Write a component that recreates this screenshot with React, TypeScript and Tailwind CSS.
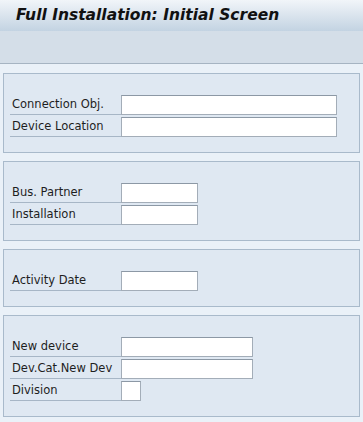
import React from "react";

type Field = { label: string; w: number };

const groups: Field[][] = [
  [
    { label: "Connection Obj.", w: 216 },
    { label: "Device Location", w: 216 },
  ],
  [
    { label: "Bus. Partner", w: 77 },
    { label: "Installation", w: 77 },
  ],
  [{ label: "Activity Date", w: 77 }],
  [
    { label: "New device", w: 132 },
    { label: "Dev.Cat.New Dev", w: 132 },
    { label: "Division", w: 20 },
  ],
];

function Row({ f }: { f: Field }) {
  return (
    <div className="flex h-[22px] items-start">
      <div className="flex h-[20px] w-[111px] items-center border-b border-[#a7b6c6] pl-[2px] pt-[1px] text-[11.5px] text-[#1e1e1e]">
        {f.label}
      </div>
      <div
        className="h-[20px] border border-[#a3adb8] border-t-[#8c98a5] bg-white"
        style={{ width: f.w }}
      />
    </div>
  );
}

export default function App() {
  return (
    <div
      className="h-[422px] w-[363px] overflow-hidden bg-[#eaf1f8]"
      style={{ fontFamily: "'DejaVu Sans', Tahoma, sans-serif" }}
    >
      <div className="flex h-[31px] items-center bg-gradient-to-b from-[#f1f5f9] to-[#c3d3e2] pl-[16px]">
        <span className="text-[15.5px] font-bold italic text-[#111]">Full Installation: Initial Screen</span>
      </div>
      <div className="h-[33px] border-b border-[#a6b4c2] bg-[#d4dee8]" />
      <div className="flex flex-col gap-[8px] px-[3px] pt-[9px]">
        {groups.map((g, i) => (
          <div key={i} className="border border-[#a9bacb] bg-[#dfe8f2] pb-[13px] pl-[6px] pt-[21px]">
            {g.map((f) => (
              <Row key={f.label} f={f} />
            ))}
          </div>
        ))}
      </div>
    </div>
  );
}
